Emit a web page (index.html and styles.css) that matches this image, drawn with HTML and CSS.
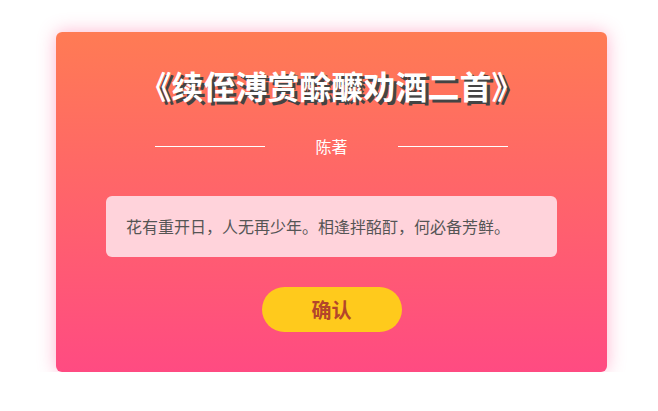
FILE: index.html
```html
<!DOCTYPE html>
<html lang="zh-CN">
<head>
  <meta charset="UTF-8">
  <title>续侄溥赏酴醿劝酒二首</title>
  <link rel="stylesheet" href="styles.css">
</head>
<body>
  <div class="card">
    <h1 class="title">《续侄溥赏酴醾劝酒二首》</h1>

    <div class="author-row">
      <span class="line"></span>
      <span class="author">陈著</span>
      <span class="line"></span>
    </div>

    <div class="poem">花有重开日，人无再少年。相逢拌酩酊，何必备芳鲜。</div>

    <div class="actions">
      <button class="confirm-btn">确认</button>
    </div>
  </div>
</body>
</html>
```

FILE: styles.css
```css
* {
  box-sizing: border-box;
}

body {
  margin: 0;
  padding: 32px 0 0 56px;
  background: #fff;
  font-family: "Microsoft YaHei", "Noto Sans CJK SC", "Noto Sans", sans-serif;
}

.card {
  width: 551px;
  height: 340px;
  padding: 33px 50px 40px;
  border-radius: 6px;
  background: linear-gradient(to bottom, #ff7b54, #ff4b82);
  box-shadow: 0 0 18px rgba(255, 90, 150, 0.45);
}

.title {
  margin: 0;
  font-size: 32px;
  line-height: 40px;
  font-weight: bold;
  color: #fff;
  text-align: center;
  text-shadow: 3px 3px 0 #444;
}

.author-row {
  display: flex;
  justify-content: center;
  align-items: center;
  gap: 50px;
  margin-top: 30px;
}

.line {
  width: 110px;
  height: 1px;
  background: #fff;
}

.author {
  font-size: 16px;
  line-height: 22px;
  color: #fff;
}

.poem {
  margin-top: 39px;
  padding: 18px 20px;
  border-radius: 6px;
  background: #ffd3db;
  color: #555;
  font-size: 16px;
  line-height: 25px;
}

.actions {
  display: flex;
  justify-content: center;
  margin-top: 30px;
}

.confirm-btn {
  width: 140px;
  height: 45px;
  border: none;
  border-radius: 23px;
  background: #ffca1c;
  color: #b3462b;
  font-family: inherit;
  font-size: 20px;
  font-weight: bold;
  cursor: pointer;
}
```
